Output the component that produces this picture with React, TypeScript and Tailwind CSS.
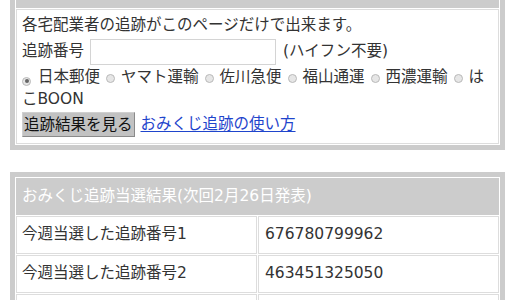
const font = "font-['DejaVu_Sans','Noto_Sans_CJK_JP',sans-serif]";

const carriers = ['日本郵便', 'ヤマト運輸', '佐川急便', '福山通運', '西濃運輸', 'はこBOON'];

const winners = [
  { label: '今週当選した追跡番号1', value: '676780799962' },
  { label: '今週当選した追跡番号2', value: '463451325050' },
  { label: '', value: '' },
];

function Radio({ checked, first }: { checked?: boolean; first?: boolean }) {
  return (
    <span
      className={`inline-flex items-center justify-center w-[9px] h-[9px] rounded-full border border-[#b9b9b9] bg-[#e6e6e6] align-[-1px] ${
        first ? 'mr-[7px]' : 'ml-[6px] mr-[6px]'
      }`}
    >
      {checked && <span className="block w-[4px] h-[4px] rounded-full bg-[#666]" />}
    </span>
  );
}

export default function App() {
  return (
    <div className={`bg-white w-[520px] h-[300px] overflow-hidden text-[15.5px] text-[#333] ${font}`}>
      {/* tracking form panel (page is scrolled, header row mostly out of view) */}
      <div className="ml-[10px] w-[495px] border-x-[5px] border-b-[5px] border-[#cccccc] px-px pb-px bg-white">
        <div className="h-[8px] bg-[#cccccc]" />
        <div className="mt-px border border-[#dddddd] px-[5px] pt-[3px] pb-[6px]">
          <div className="h-[24px] leading-[24px]">各宅配業者の追跡がこのページだけで出来ます。</div>
          <div className="mt-px h-[28px] flex items-center">
            <span>追跡番号</span>
            <input
              type="text"
              className="ml-[6px] w-[186px] h-[26px] border border-[#d4d4d4] bg-white outline-none px-1"
            />
            <span className="ml-[7px]">(ハイフン不要)</span>
          </div>
          <p className="leading-[22px]">
            {carriers.map((c, i) => (
              <span key={c}>
                <Radio checked={i === 0} first={i === 0} />
                {c}
              </span>
            ))}
          </p>
          <div className="mt-[2px] h-[25px] flex items-center">
            <button
              type="button"
              className="h-[25px] px-px bg-[#c2c2c2] border border-[#d0d0d0] border-r-[#8a8a8a] border-b-[#8a8a8a] text-[#111] leading-[22px]"
            >
              追跡結果を見る
            </button>
            <a href="#" className="ml-[6px] text-[#1f45cc] underline underline-offset-2">
              おみくじ追跡の使い方
            </a>
          </div>
        </div>
      </div>

      {/* lottery results table */}
      <div className="mt-[22px] ml-[10px] w-[495px] border-[5px] border-[#cccccc] p-px bg-white">
        <div className="h-[37px] bg-[#cccccc] text-white px-[6px] flex items-center">
          おみくじ追跡当選結果(次回2月26日発表)
        </div>
        <div className="mt-px grid grid-cols-[241px_1fr] gap-px">
          {winners.map((w, i) => (
            <div key={i} className="contents">
              <div className="h-[38px] border border-[#dddddd] px-[5px] flex items-center">{w.label}</div>
              <div className="h-[38px] border border-[#dddddd] px-[6px] flex items-center">{w.value}</div>
            </div>
          ))}
        </div>
      </div>
    </div>
  );
}
